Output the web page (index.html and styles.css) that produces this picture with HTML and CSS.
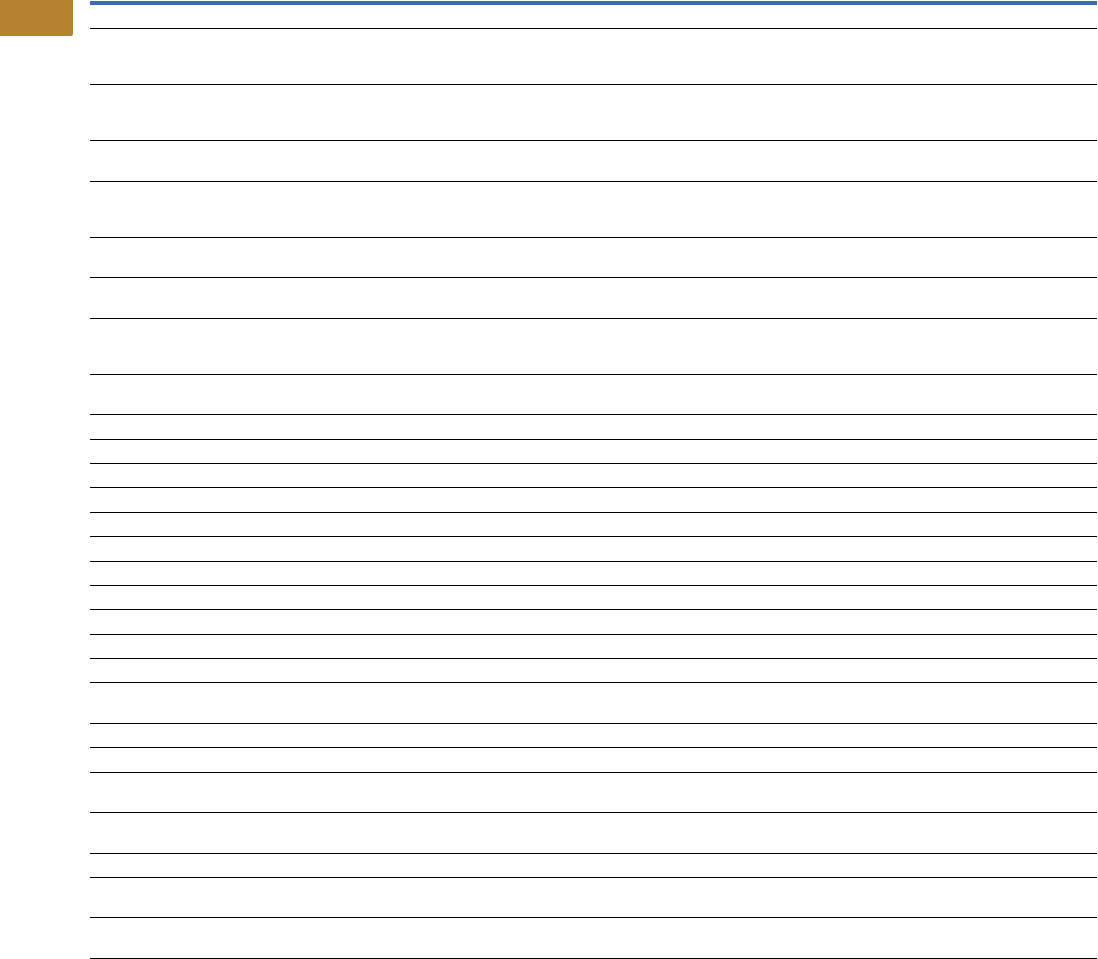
FILE: index.html
```html
<!DOCTYPE html>
<html lang="en">
<head>
    <meta charset="UTF-8">
    <meta name="viewport" content="width=device-width, initial-scale=1.0">
    <title>Table</title>
    <link rel="stylesheet" href="styles.css">
</head>
<body>
    <div class="page">
        <div class="margin">
            <div class="tab"></div>
        </div>

        <div class="content">
            <div class="rule"></div>

            <!-- empty ruled table -->
            <div class="table">
                <div class="row row-3"></div>
                <div class="row row-3"></div>
                <div class="row row-2"></div>
                <div class="row row-3"></div>
                <div class="row row-2"></div>
                <div class="row row-2"></div>
                <div class="row row-3"></div>
                <div class="row row-2"></div>
                <div class="row row-1"></div>
                <div class="row row-1"></div>
                <div class="row row-1"></div>
                <div class="row row-1"></div>
                <div class="row row-1"></div>
                <div class="row row-1"></div>
                <div class="row row-1"></div>
                <div class="row row-1"></div>
                <div class="row row-1"></div>
                <div class="row row-1"></div>
                <div class="row row-1"></div>
                <div class="row row-2"></div>
                <div class="row row-1"></div>
                <div class="row row-1"></div>
                <div class="row row-2"></div>
                <div class="row row-2"></div>
                <div class="row row-1"></div>
                <div class="row row-2"></div>
                <div class="row row-2"></div>
            </div>
        </div>
    </div>
</body>
</html>
```

FILE: styles.css
```css
body {
    margin: 0;
    background: #fff;
    font-family: "Liberation Sans", Arial, sans-serif;
}

.page {
    display: flex;
}

.margin {
    width: 90px;
    flex-shrink: 0;
}

.tab {
    width: 73px;
    height: 36px;
    background: #b4812f;
    border-bottom-right-radius: 2px;
}

.content {
    width: 1007px;
    padding-top: 1px;
}

.rule {
    height: 4px;
    background: #3a6cb4;
}

.table {
    margin-top: 23.3px;
    border-top: 1px solid #000;
}

.row {
    box-sizing: border-box;
    border-bottom: 1px solid #000;
}

.row-1 {
    height: 24.37px;
}

.row-2 {
    height: 40.53px;
}

.row-3 {
    height: 56px;
}
```
